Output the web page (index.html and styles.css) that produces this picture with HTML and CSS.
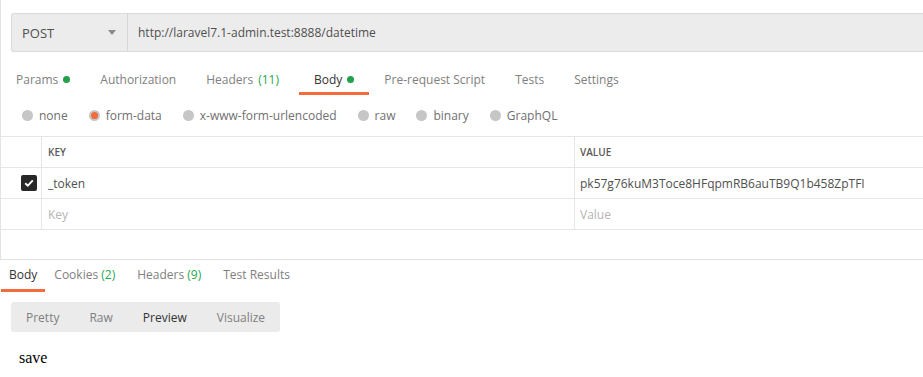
FILE: index.html
```html
<!DOCTYPE html>
<html lang="en">
<head>
    <meta charset="UTF-8">
    <title>POST datetime</title>
    <link rel="stylesheet" href="styles.css">
</head>
<body>

<div class="request">
    <!-- url bar -->
    <div class="url_bar">
        <div class="method">
            <span>POST</span>
            <span class="caret"></span>
        </div>
        <div class="url">http://laravel7.1-admin.test:8888/datetime</div>
    </div>

    <div class="req_tabs">
        <div class="tab">Params <span class="dot"></span></div>
        <div class="tab">Authorization</div>
        <div class="tab tab_wide">Headers <span class="count">(11)</span></div>
        <div class="tab active">Body <span class="dot"></span></div>
        <div class="tab">Pre-request Script</div>
        <div class="tab">Tests</div>
        <div class="tab">Settings</div>
    </div>

    <div class="body_types">
        <label class="radio"><span class="circle"></span>none</label>
        <label class="radio"><span class="circle checked"></span>form-data</label>
        <label class="radio"><span class="circle"></span>x-www-form-urlencoded</label>
        <label class="radio"><span class="circle"></span>raw</label>
        <label class="radio"><span class="circle"></span>binary</label>
        <label class="radio"><span class="circle"></span>GraphQL</label>
    </div>

    <div class="kv_table">
        <div class="kv_row kv_head">
            <div class="cell c_check"></div>
            <div class="cell c_key">KEY</div>
            <div class="cell c_value">VALUE</div>
        </div>
        <div class="kv_row">
            <div class="cell c_check">
                <span class="checkbox">
                    <svg width="10" height="8" viewBox="0 0 10 8"><path d="M1.2 4.2 L3.8 6.6 L8.8 1.4" fill="none" stroke="#fff" stroke-width="1.9"/></svg>
                </span>
            </div>
            <div class="cell c_key">_token</div>
            <div class="cell c_value">pk57g76kuM3Toce8HFqpmRB6auTB9Q1b458ZpTFI</div>
        </div>
        <div class="kv_row">
            <div class="cell c_check"></div>
            <div class="cell c_key placeholder">Key</div>
            <div class="cell c_value placeholder">Value</div>
        </div>
    </div>
</div>

<div class="response">
    <div class="res_tabs">
        <div class="rtab active">Body</div>
        <div class="rtab">Cookies <span class="count">(2)</span></div>
        <div class="rtab">Headers <span class="count">(9)</span></div>
        <div class="rtab">Test Results</div>
    </div>

    <div class="view_modes">
        <span class="mode">Pretty</span>
        <span class="mode">Raw</span>
        <span class="mode active">Preview</span>
        <span class="mode">Visualize</span>
    </div>

    <div class="preview">save</div>
</div>

</body>
</html>
```

FILE: styles.css
```css
*{
    margin: 0;
    padding: 0;
    box-sizing: border-box;
}
body{
    background-color: white;
    font-family: "Open Sans", "Noto Sans", sans-serif;
    font-size: 12px;
    color: #808080;
}

.request{
    border-left: 1px solid #e3e3e3;
    height: 259px;
    padding-top: 13px;
}

/* url bar */
.url_bar{
    display: flex;
    height: 39px;
    margin-left: 10px;
    background-color: #ececec;
    border: 1px solid #dadada;
    border-right: none;
    border-radius: 3px 0 0 3px;
}
.method{
    width: 116px;
    display: flex;
    align-items: center;
    justify-content: space-between;
    padding: 0 11px 0 10px;
    border-right: 1px solid #d6d6d6;
    color: #505050;
    font-size: 13px;
}
.caret{
    width: 0;
    height: 0;
    border-left: 4px solid transparent;
    border-right: 4px solid transparent;
    border-top: 5px solid #8a8a8a;
}
.url{
    display: flex;
    align-items: center;
    padding-left: 10px;
    color: #505050;
}

/* request tabs */
.req_tabs{
    display: flex;
    margin-top: 15px;
}
.tab{
    padding: 0 15px;
    height: 28px;
    line-height: 25px;
    border-bottom: 3px solid transparent;
    display: flex;
    align-items: center;
    gap: 5px;
}
.tab_wide{
    padding-right: 20px;
}
.tab.active{
    color: #333;
    border-bottom-color: #f26b3a;
}
.dot{
    width: 7px;
    height: 7px;
    border-radius: 50%;
    background-color: #22a04b;
}
.count{
    color: #26a652;
}

/* body type radios */
.body_types{
    display: flex;
    align-items: center;
    height: 41px;
    padding-left: 21px;
    color: #707070;
}
.radio{
    display: flex;
    align-items: center;
    margin-right: 21px;
}
.circle{
    width: 11px;
    height: 11px;
    border-radius: 50%;
    background-color: #c6c6c6;
    margin-right: 6px;
}
.circle.checked{
    background-color: #f26b3a;
    border: 2.5px solid #c6c6c6;
}

/* key / value table */
.kv_table{
    border-top: 1px solid #e6e6e6;
}
.kv_row{
    display: flex;
    height: 31px;
    border-bottom: 1px solid #e6e6e6;
}
.cell{
    display: flex;
    align-items: center;
    padding-left: 6px;
    color: #505050;
}
.c_check{
    width: 41px;
    border-right: 1px solid #e6e6e6;
    padding-left: 20px;
}
.c_key{
    width: 533px;
    border-right: 1px solid #e6e6e6;
}
.c_value{
    flex: 1;
    padding-left: 5px;
}
.kv_head .cell{
    font-size: 10px;
    font-weight: 600;
    color: #5a5a5a;
}
.placeholder{
    color: #b5b5b5;
}
.checkbox{
    width: 16px;
    height: 16px;
    border-radius: 2px;
    background-color: #282828;
    display: flex;
    align-items: center;
    justify-content: center;
}

/* response */
.response{
    border-top: 1px solid #e0e0e0;
}
.res_tabs{
    display: flex;
    height: 32px;
}
.rtab{
    padding: 0 11px;
    line-height: 29px;
    border-bottom: 3px solid transparent;
}
.rtab.active{
    margin-left: 1px;
    padding: 0 8px;
    color: #333;
    border-bottom-color: #f26b3a;
}
.rtab.active + .rtab{
    padding-left: 9px;
}

.view_modes{
    display: inline-flex;
    margin: 10px 0 0 11px;
    height: 30px;
    background-color: #ebebeb;
    border-radius: 3px;
    align-items: center;
}
.mode{
    padding: 0 15px;
}
.mode.active{
    color: #333;
}

.preview{
    font-family: "Liberation Serif", serif;
    font-size: 16px;
    color: #000;
    margin: 17px 0 0 19px;
}
```
